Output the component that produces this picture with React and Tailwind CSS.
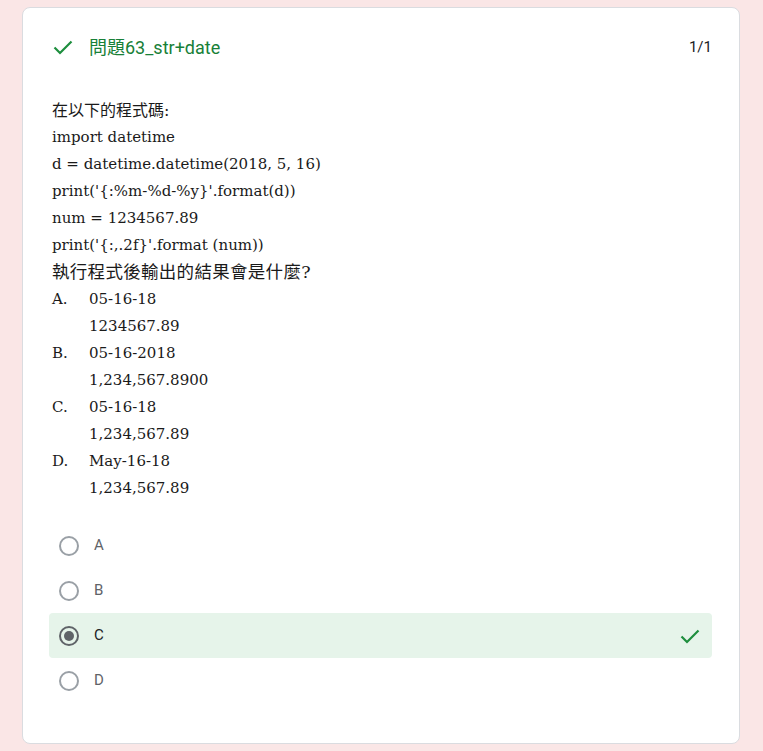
import React from 'react';

const lines = [
  ['在以下的程式碼:', 'text-[16px]'],
  ['import datetime'],
  ['d = datetime.datetime(2018, 5, 16)'],
  ["print('{:%m-%d-%y}'.format(d))"],
  ['num = 1234567.89'],
  ["print('{:,.2f}'.format (num))"],
  ['執行程式後輸出的結果會是什麼?', 'text-[17.5px] tracking-[0.3px]'],
];

const choices = [
  ['A.', '05-16-18', '1234567.89'],
  ['B.', '05-16-2018', '1,234,567.8900'],
  ['C.', '05-16-18', '1,234,567.89'],
  ['D.', 'May-16-18', '1,234,567.89'],
];

const options = ['A', 'B', 'C', 'D'];
const picked = 'C';

const Check = ({ className }) => (
  <svg viewBox="0 0 24 24" className={className} fill="none" stroke="currentColor" strokeWidth="2.2">
    <path d="M3.5 12.5l5.5 5.5L20.5 6.5" />
  </svg>
);

const App = () => {
  return (
    <div className="min-h-[751px] bg-[#fae6e6] pt-[7px] pl-[22px]" style={{ fontFamily: 'Roboto, "Noto Sans CJK TC", sans-serif' }}>
      <div className="w-[718px] h-[737px] bg-white rounded-lg border border-[#dadce0] pl-[26px] pr-[27px]">
        <div className="flex items-center justify-between pt-[27px] h-[51px]">
          <div className="flex items-center pl-[2px]">
            <Check className="w-[24px] h-[24px] text-[#1e8e3e]" />
            <span className="ml-[14px] text-[18px] text-[#188038]">問題63_str+date</span>
          </div>
          <span className="text-[15px] text-[#202124]">1/1</span>
        </div>

        <div
          className="mt-[38px] pl-[3px] text-[15px] leading-[27px] text-[#1a1a1a]"
          style={{ fontFamily: '"DejaVu Serif", "Noto Sans CJK TC", serif' }}
        >
          {lines.map(([l, cls]) => (
            <div key={l} className={cls || ''}>
              {l}
            </div>
          ))}
          {choices.map(([k, a, b]) => (
            <div key={k}>
              <div className="flex">
                <span className="w-[37px]">{k}</span>
                <span>{a}</span>
              </div>
              <div className="pl-[37px]">{b}</div>
            </div>
          ))}
        </div>

        <div className="mt-[21px]">
          {options.map((o) => {
            const sel = o === picked;
            return (
              <div
                key={o}
                className={`flex items-center h-[45px] rounded pl-[10px] pr-[10px] ${sel ? 'bg-[#e6f4ea]' : ''}`}
              >
                <div
                  className={`w-[20px] h-[20px] rounded-full border-2 flex items-center justify-center ${sel ? 'border-[#5f6368]' : 'border-[#9aa0a6]'}`}
                >
                  {sel && <div className="w-[10px] h-[10px] rounded-full bg-[#5f6368]" />}
                </div>
                <span className={`ml-[15px] text-[15px] ${sel ? 'text-[#202124]' : 'text-[#5f6368]'}`}>{o}</span>
                {sel && <Check className="ml-auto w-[24px] h-[24px] text-[#1e8e3e]" />}
              </div>
            );
          })}
        </div>
      </div>
    </div>
  );
};

export default App;
